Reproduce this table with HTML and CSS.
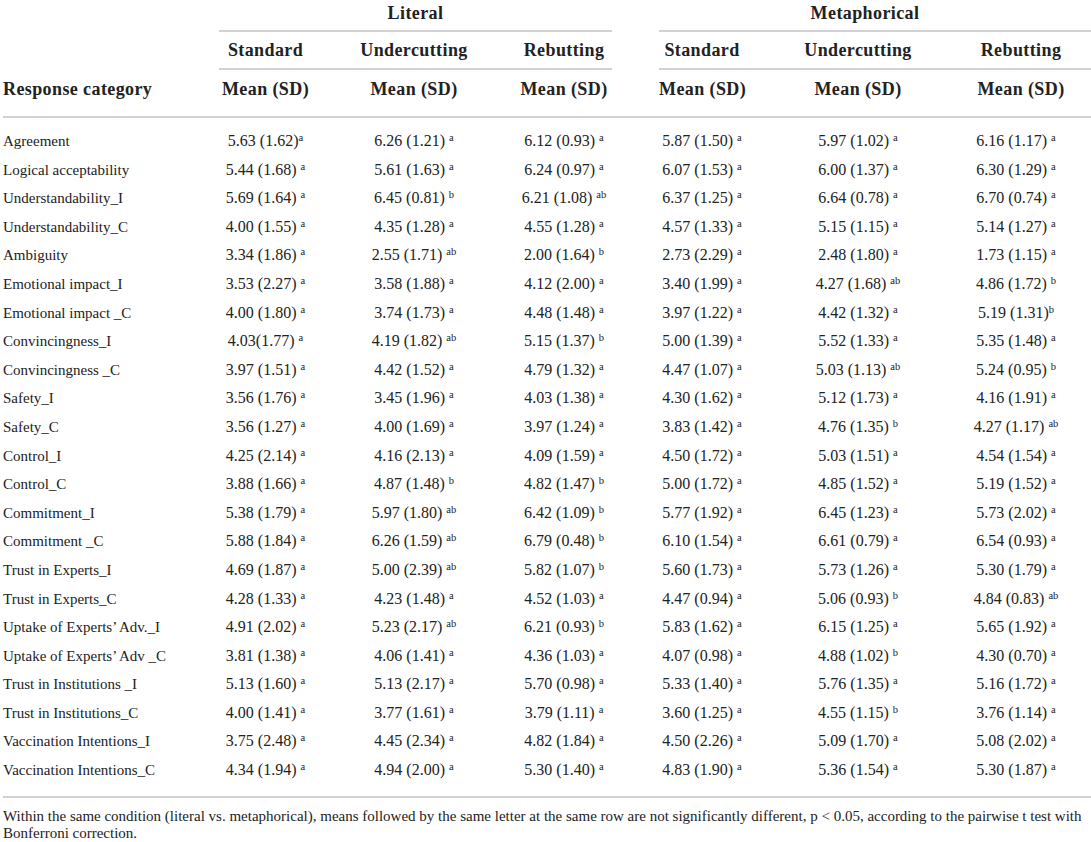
FILE: index.html
```html
<!DOCTYPE html>
<html lang="en">
<head>
<meta charset="utf-8">
<title>Response category means</title>
<link rel="stylesheet" href="styles.css">
</head>
<body>
<div class="page">
<table class="stats">
  <colgroup>
    <col class="c-label">
    <col class="c-lstd">
    <col class="c-lund">
    <col class="c-lreb">
    <col class="c-gap">
    <col class="c-mstd">
    <col class="c-mund">
    <col class="c-mreb">
  </colgroup>
  <thead>
    <tr class="h1">
      <th></th>
      <th colspan="3" class="group">Literal</th>
      <th></th>
      <th colspan="3" class="group meta">Metaphorical</th>
    </tr>
    <tr class="h2">
      <th></th>
      <th class="sub">Standard</th>
      <th class="sub">Undercutting</th>
      <th class="sub">Rebutting</th>
      <th></th>
      <th class="sub">Standard</th>
      <th class="sub">Undercutting</th>
      <th class="sub last">Rebutting</th>
    </tr>
    <tr class="h3">
      <th class="label">Response category</th>
      <th>Mean (SD)</th>
      <th>Mean (SD)</th>
      <th>Mean (SD)</th>
      <th></th>
      <th>Mean (SD)</th>
      <th>Mean (SD)</th>
      <th class="last">Mean (SD)</th>
    </tr>
  </thead>
  <tbody>
    <tr><td class="label">Agreement</td><td>5.63 (1.62)<sup>a</sup></td><td>6.26 (1.21) <sup>a</sup></td><td>6.12 (0.93) <sup>a</sup></td><td></td><td>5.87 (1.50) <sup>a</sup></td><td>5.97 (1.02) <sup>a</sup></td><td class="last">6.16 (1.17) <sup>a</sup></td></tr>
    <tr><td class="label">Logical acceptability</td><td>5.44 (1.68) <sup>a</sup></td><td>5.61 (1.63) <sup>a</sup></td><td>6.24 (0.97) <sup>a</sup></td><td></td><td>6.07 (1.53) <sup>a</sup></td><td>6.00 (1.37) <sup>a</sup></td><td class="last">6.30 (1.29) <sup>a</sup></td></tr>
    <tr><td class="label">Understandability_I</td><td>5.69 (1.64) <sup>a</sup></td><td>6.45 (0.81) <sup>b</sup></td><td>6.21 (1.08) <sup>ab</sup></td><td></td><td>6.37 (1.25) <sup>a</sup></td><td>6.64 (0.78) <sup>a</sup></td><td class="last">6.70 (0.74) <sup>a</sup></td></tr>
    <tr><td class="label">Understandability_C</td><td>4.00 (1.55) <sup>a</sup></td><td>4.35 (1.28) <sup>a</sup></td><td>4.55 (1.28) <sup>a</sup></td><td></td><td>4.57 (1.33) <sup>a</sup></td><td>5.15 (1.15) <sup>a</sup></td><td class="last">5.14 (1.27) <sup>a</sup></td></tr>
    <tr><td class="label">Ambiguity</td><td>3.34 (1.86) <sup>a</sup></td><td>2.55 (1.71) <sup>ab</sup></td><td>2.00 (1.64) <sup>b</sup></td><td></td><td>2.73 (2.29) <sup>a</sup></td><td>2.48 (1.80) <sup>a</sup></td><td class="last">1.73 (1.15) <sup>a</sup></td></tr>
    <tr><td class="label">Emotional impact_I</td><td>3.53 (2.27) <sup>a</sup></td><td>3.58 (1.88) <sup>a</sup></td><td>4.12 (2.00) <sup>a</sup></td><td></td><td>3.40 (1.99) <sup>a</sup></td><td>4.27 (1.68) <sup>ab</sup></td><td class="last">4.86 (1.72) <sup>b</sup></td></tr>
    <tr><td class="label">Emotional impact _C</td><td>4.00 (1.80) <sup>a</sup></td><td>3.74 (1.73) <sup>a</sup></td><td>4.48 (1.48) <sup>a</sup></td><td></td><td>3.97 (1.22) <sup>a</sup></td><td>4.42 (1.32) <sup>a</sup></td><td class="last">5.19 (1.31)<sup>b</sup></td></tr>
    <tr><td class="label">Convincingness_I</td><td>4.03(1.77) <sup>a</sup></td><td>4.19 (1.82) <sup>ab</sup></td><td>5.15 (1.37) <sup>b</sup></td><td></td><td>5.00 (1.39) <sup>a</sup></td><td>5.52 (1.33) <sup>a</sup></td><td class="last">5.35 (1.48) <sup>a</sup></td></tr>
    <tr><td class="label">Convincingness _C</td><td>3.97 (1.51) <sup>a</sup></td><td>4.42 (1.52) <sup>a</sup></td><td>4.79 (1.32) <sup>a</sup></td><td></td><td>4.47 (1.07) <sup>a</sup></td><td>5.03 (1.13) <sup>ab</sup></td><td class="last">5.24 (0.95) <sup>b</sup></td></tr>
    <tr><td class="label">Safety_I</td><td>3.56 (1.76) <sup>a</sup></td><td>3.45 (1.96) <sup>a</sup></td><td>4.03 (1.38) <sup>a</sup></td><td></td><td>4.30 (1.62) <sup>a</sup></td><td>5.12 (1.73) <sup>a</sup></td><td class="last">4.16 (1.91) <sup>a</sup></td></tr>
    <tr><td class="label">Safety_C</td><td>3.56 (1.27) <sup>a</sup></td><td>4.00 (1.69) <sup>a</sup></td><td>3.97 (1.24) <sup>a</sup></td><td></td><td>3.83 (1.42) <sup>a</sup></td><td>4.76 (1.35) <sup>b</sup></td><td class="last">4.27 (1.17) <sup>ab</sup></td></tr>
    <tr><td class="label">Control_I</td><td>4.25 (2.14) <sup>a</sup></td><td>4.16 (2.13) <sup>a</sup></td><td>4.09 (1.59) <sup>a</sup></td><td></td><td>4.50 (1.72) <sup>a</sup></td><td>5.03 (1.51) <sup>a</sup></td><td class="last">4.54 (1.54) <sup>a</sup></td></tr>
    <tr><td class="label">Control_C</td><td>3.88 (1.66) <sup>a</sup></td><td>4.87 (1.48) <sup>b</sup></td><td>4.82 (1.47) <sup>b</sup></td><td></td><td>5.00 (1.72) <sup>a</sup></td><td>4.85 (1.52) <sup>a</sup></td><td class="last">5.19 (1.52) <sup>a</sup></td></tr>
    <tr><td class="label">Commitment_I</td><td>5.38 (1.79) <sup>a</sup></td><td>5.97 (1.80) <sup>ab</sup></td><td>6.42 (1.09) <sup>b</sup></td><td></td><td>5.77 (1.92) <sup>a</sup></td><td>6.45 (1.23) <sup>a</sup></td><td class="last">5.73 (2.02) <sup>a</sup></td></tr>
    <tr><td class="label">Commitment _C</td><td>5.88 (1.84) <sup>a</sup></td><td>6.26 (1.59) <sup>ab</sup></td><td>6.79 (0.48) <sup>b</sup></td><td></td><td>6.10 (1.54) <sup>a</sup></td><td>6.61 (0.79) <sup>a</sup></td><td class="last">6.54 (0.93) <sup>a</sup></td></tr>
    <tr><td class="label">Trust in Experts_I</td><td>4.69 (1.87) <sup>a</sup></td><td>5.00 (2.39) <sup>ab</sup></td><td>5.82 (1.07) <sup>b</sup></td><td></td><td>5.60 (1.73) <sup>a</sup></td><td>5.73 (1.26) <sup>a</sup></td><td class="last">5.30 (1.79) <sup>a</sup></td></tr>
    <tr><td class="label">Trust in Experts_C</td><td>4.28 (1.33) <sup>a</sup></td><td>4.23 (1.48) <sup>a</sup></td><td>4.52 (1.03) <sup>a</sup></td><td></td><td>4.47 (0.94) <sup>a</sup></td><td>5.06 (0.93) <sup>b</sup></td><td class="last">4.84 (0.83) <sup>ab</sup></td></tr>
    <tr><td class="label">Uptake of Experts’ Adv._I</td><td>4.91 (2.02) <sup>a</sup></td><td>5.23 (2.17) <sup>ab</sup></td><td>6.21 (0.93) <sup>b</sup></td><td></td><td>5.83 (1.62) <sup>a</sup></td><td>6.15 (1.25) <sup>a</sup></td><td class="last">5.65 (1.92) <sup>a</sup></td></tr>
    <tr><td class="label">Uptake of Experts’ Adv _C</td><td>3.81 (1.38) <sup>a</sup></td><td>4.06 (1.41) <sup>a</sup></td><td>4.36 (1.03) <sup>a</sup></td><td></td><td>4.07 (0.98) <sup>a</sup></td><td>4.88 (1.02) <sup>b</sup></td><td class="last">4.30 (0.70) <sup>a</sup></td></tr>
    <tr><td class="label">Trust in Institutions _I</td><td>5.13 (1.60) <sup>a</sup></td><td>5.13 (2.17) <sup>a</sup></td><td>5.70 (0.98) <sup>a</sup></td><td></td><td>5.33 (1.40) <sup>a</sup></td><td>5.76 (1.35) <sup>a</sup></td><td class="last">5.16 (1.72) <sup>a</sup></td></tr>
    <tr><td class="label">Trust in Institutions_C</td><td>4.00 (1.41) <sup>a</sup></td><td>3.77 (1.61) <sup>a</sup></td><td>3.79 (1.11) <sup>a</sup></td><td></td><td>3.60 (1.25) <sup>a</sup></td><td>4.55 (1.15) <sup>b</sup></td><td class="last">3.76 (1.14) <sup>a</sup></td></tr>
    <tr><td class="label">Vaccination Intentions_I</td><td>3.75 (2.48) <sup>a</sup></td><td>4.45 (2.34) <sup>a</sup></td><td>4.82 (1.84) <sup>a</sup></td><td></td><td>4.50 (2.26) <sup>a</sup></td><td>5.09 (1.70) <sup>a</sup></td><td class="last">5.08 (2.02) <sup>a</sup></td></tr>
    <tr><td class="label">Vaccination Intentions_C</td><td>4.34 (1.94) <sup>a</sup></td><td>4.94 (2.00) <sup>a</sup></td><td>5.30 (1.40) <sup>a</sup></td><td></td><td>4.83 (1.90) <sup>a</sup></td><td>5.36 (1.54) <sup>a</sup></td><td class="last">5.30 (1.87) <sup>a</sup></td></tr>
  </tbody>
</table>
<p class="note">Within the same condition (literal vs. metaphorical), means followed by the same letter at the same row are not significantly different, p &lt; 0.05, according to the pairwise t test with Bonferroni correction.</p>
</div>
</body>
</html>
```

FILE: styles.css
```css
html, body {
  margin: 0;
  padding: 0;
  background: #ffffff;
}

.page {
  padding-left: 3px;
  font-family: "Liberation Serif", "Times New Roman", serif;
  color: #222222;
}

.stats {
  width: 1088px;
  border-collapse: collapse;
  border-spacing: 0;
  table-layout: fixed;
}

.c-label { width: 216px; }
.c-lstd { width: 93px; }
.c-lund { width: 204px; }
.c-lreb { width: 96px; }
.c-gap { width: 47px; }
.c-mstd { width: 86px; }
.c-mund { width: 226px; }
.c-mreb { width: 120px; }

.stats th {
  font-size: 18px;
  font-weight: bold;
  letter-spacing: 0.4px;
  line-height: 20px;
  text-align: center;
  padding: 0;
  white-space: nowrap;
}

.stats th.last {
  padding-right: 20px;
}

.stats td.last {
  padding-right: 30px;
}

.h1 th {
  padding-top: 3px;
  padding-bottom: 7px;
}

.h1 th.group {
  border-bottom: 2px solid #d2d2d2;
}

.h1 th.meta {
  padding-right: 20px;
}

.h2 th {
  padding-top: 8px;
  padding-bottom: 8px;
}

.h2 th.sub {
  border-bottom: 2px solid #d2d2d2;
}

.h3 th {
  padding-top: 9px;
  padding-bottom: 17px;
  border-bottom: 2px solid #d2d2d2;
}

.stats th.label {
  text-align: left;
}

.stats td {
  font-size: 16px;
  line-height: 28.6px;
  padding: 0;
  text-align: center;
  white-space: nowrap;
}

.stats td.label {
  font-size: 15px;
  text-align: left;
}

.stats tbody tr:first-child td {
  padding-top: 9px;
}

.stats tbody tr:last-child td {
  padding-bottom: 11px;
  border-bottom: 2px solid #d2d2d2;
}

.stats sup {
  font-size: 10.5px;
  line-height: 0;
  vertical-align: 5px;
}

.note {
  margin: 10px 0 0 0;
  font-size: 15px;
  line-height: 17px;
}
```
